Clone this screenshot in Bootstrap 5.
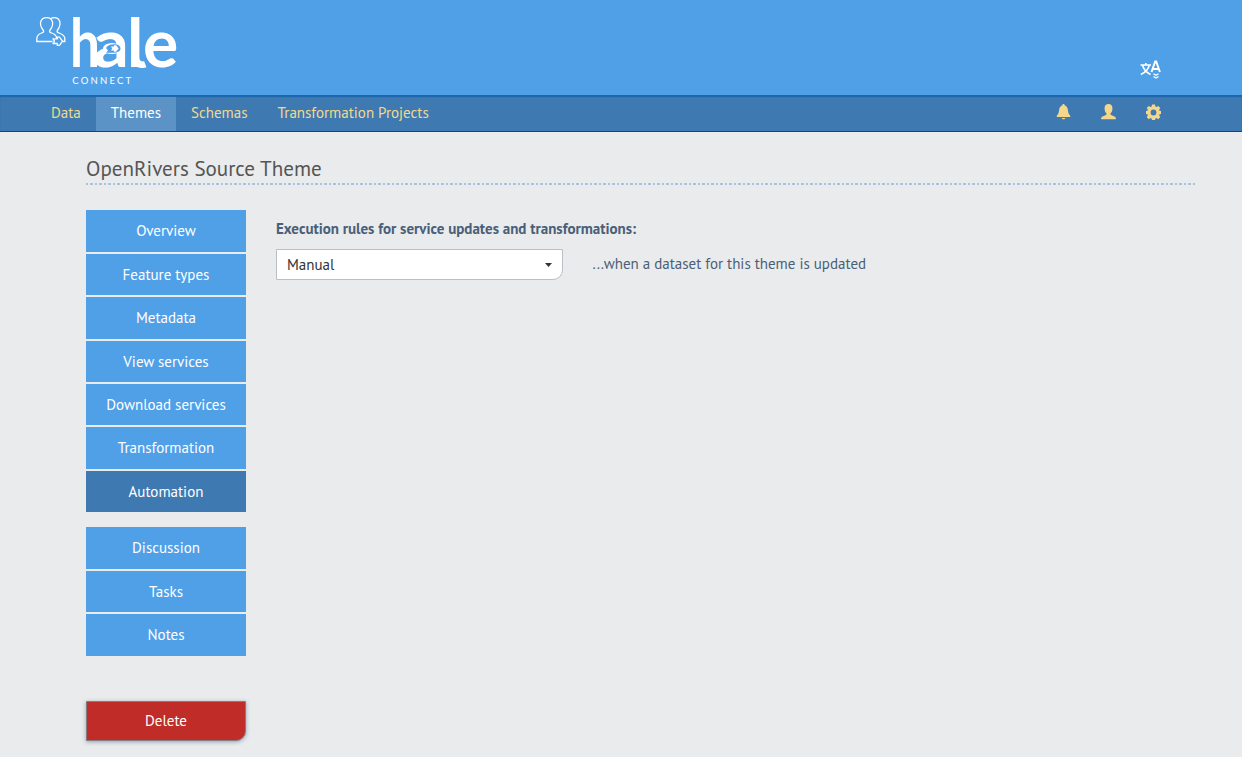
<!DOCTYPE html>
<html lang="en">
<head>
<meta charset="utf-8">
<meta name="viewport" content="width=device-width, initial-scale=1">
<title>hale connect</title>
<link href="https://cdn.jsdelivr.net/npm/bootstrap@5.3.0/dist/css/bootstrap.min.css" rel="stylesheet">
<style>
body{background:#e9ebec;font-family:"PT Sans","Noto Sans",sans-serif;font-size:15px;line-height:20px;color:#4a5f78;height:757px;overflow:hidden}
.brandbar{background:#50a0e8;height:95px;padding:0 81px 0 36px}
.brandbar .logo{margin-top:9px}
.lang{margin-top:59px}
.mainnav{background:#3f79b2;height:37px;border-bottom:1px solid #1e446e;box-shadow:inset 0 2px 1px #1d66ad;padding:2px 81px 0 36px}
.mainnav .nav-link{color:#f2d98c;height:34px;line-height:32px;padding:0 15px}
.mainnav .nav-link.active{background:#5c93c7;color:#fff}
.icons{gap:30px;padding-top:7px;color:#f4d78a}
.page{padding:25px 46px 0 86px}
.page h1{font-size:21.050px;line-height:24px;color:#555;height:28px;margin:0 0 25px;background:repeating-linear-gradient(90deg,#a8c4e0 0 2.400px,transparent 2.400px 4.500px) 0 100%/100% 2px no-repeat}
.side{width:160px;margin-right:30px;flex:none;padding-top:.3px}
.side .list-group{gap:2px;border-radius:0}
.side .list-group-item{background:#50a0e8;color:#fff;border:0!important;margin:0!important;border-radius:0!important;height:41.420px;line-height:41px;padding:0;text-align:center}
.side .list-group-item.active{background:#3f79b2}
.side .second{margin-top:15.200px}
.del{background:#c02c28;color:#fff;border:1px solid #8b7b80;border-radius:0 0 10px 0;height:40px;margin-top:45.200px;font-size:15px;line-height:38px;padding:0;box-shadow:0 1px 4px #8fa3b8}
.rule-title{margin:9px 0 10px}
.pick{width:287px;height:31px;background:#fff;border:1px solid #b8c0c6;border-radius:0 0 10px 0;color:#333;padding:0 10px;font-size:15px}
.trigger{margin-left:29.500px;margin-top:-1px}
</style>
</head>
<body>
<header class="brandbar d-flex justify-content-between align-items-start">
<svg class="logo" width="145" height="85" viewBox="36 9 145 85" overflow="visible" role="img" aria-label="hale connect">
<g fill="none" stroke="#fff" stroke-width="1.300" stroke-linejoin="round">
<path d="M52.500 41.500H36.800V38.500c.2-3 1.700-4.400 4.800-5.500 2.200-.8 2.600-1.600 1.200-3.500-4.300-5.500-2.300-11.800 3.800-11.800s8 6.300 3.800 11.800c-1.400 1.900-1 2.700 1.200 3.500 3.100 1.100 4.900 2.300 5 5"/>
<path d="M51 18.500c1-.6 2-.8 3.100-.8 6.100 0 7.700 6.300 3.800 11.800-1.400 1.900-1 2.700 1.200 3.500 3.600 1.300 5.700 2.500 5.700 5.500v3h-2.300"/>
<path d="M53 38.900h4.300v-1.800h2.200l3 4.100-3 4.200h-2.200v-1.900H53l1.500-2.300z"/>
</g>
<g font-family="Lato,sans-serif" font-weight="700" font-size="66" fill="#fff">
<text y="67" x="70" textLength="30" lengthAdjust="spacingAndGlyphs">h</text>
<text y="67" x="93" textLength="36" lengthAdjust="spacingAndGlyphs">a</text>
<text y="67" x="127">l</text>
<text y="67" x="143">e</text>
</g>
<path d="M131.400 56c0 7.500 4 12 11 12 1.500 0 3-.3 4-.7l-2.300-6c-3.600.7-5.100-1-5.100-5.300z" fill="#fff"/>
<ellipse cx="112" cy="48.500" rx="9" ry="5.500" fill="#fff"/>
<path d="M106 48c1.500-2.500 4-3.700 7.500-3.700 4.500 0 7 1.500 7 4.200s-2.500 4.200-7 4.200H106l2-2.200z" fill="#50a0e8"/>
<path d="M111 46.500h3v-1.300h2l2.700 3.300-2.700 3.300h-2v-1.300h-3l1.300-2z" fill="#fff"/>
<text x="72.200" y="83.500" font-family="Lato,sans-serif" font-size="9.500" fill="#fff" textLength="59">CONNECT</text>
</svg>
<svg class="lang" width="22" height="22" viewBox="1139 59 22 22" fill="none" stroke="#fff" stroke-width="1.600">
<path d="M1140.500 65h10.500M1145.800 63v2M1142.500 65c1 4.500 4 7.500 8 9.500M1149.300 65c-1 4.500-4 7.500-8.500 9.500"/>
<path d="M1151.500 72l3.700-10.500h1l3.700 10.500M1152.700 69h6" stroke-width="2"/>
<path d="M1153.500 73.800l2.500 1.500 2.500-1.500M1153.500 76.500l2.500 1.500 2.500-1.500" stroke-width="1.300"/>
</svg>
</header>
<nav class="mainnav d-flex justify-content-between">
<div class="nav flex-nowrap">
<a class="nav-link">Data</a>
<a class="nav-link active">Themes</a>
<a class="nav-link">Schemas</a>
<a class="nav-link">Transformation Projects</a>
</div>
<div class="icons d-flex">
<svg width="15" height="16" viewBox="0 0 15 16" fill="currentColor"><path d="M7.500 0c.8 0 1.100.5 1.100 1.200 2 .6 3 2.300 3.300 4.800.3 2.700.7 4.300 2.300 5.500v1.400H.8v-1.400C2.400 10.300 2.800 8.700 3.100 6c.3-2.500 1.300-4.200 3.300-4.800C6.400.5 6.700 0 7.500 0zM5.700 14h3.600c-.3 1.700-3.300 1.700-3.600 0z"/></svg>
<svg width="15" height="16" viewBox="0 0 16 16" preserveAspectRatio="none" fill="currentColor"><path d="M8 0c2.900 0 4.200 1.800 4.200 4.400 0 2.300-.8 3.800-2 4.800v1.600l4.700 2c.7.300 1 1.200 1 2.500H.1c0-1.300.3-2.200 1-2.500l4.700-2V9.200c-1.200-1-2-2.500-2-4.800C3.800 1.800 5.100 0 8 0z"/></svg>
<svg width="15" height="16" viewBox="0 0 15 16" fill="currentColor"><path fill-rule="evenodd" d="M6 .6h3l.4 2 1 .5 1.800-1.200 2.100 2.100-1.200 1.800.4 1 2 .4v2.700l-2 .4-.4 1 1.200 1.800-2.100 2.100-1.800-1.200-1 .4-.4 2H6l-.4-2-1-.4-1.800 1.200-2.100-2.100 1.200-1.800-.4-1-1.900-.4V7.200l1.900-.4.400-1L.7 4l2.100-2.100 1.800 1.200 1-.5zM7.500 5.600a2.900 2.900 0 1 0 0 5.800 2.900 2.900 0 0 0 0-5.800z"/></svg>
</div>
</nav>
<main class="page">
<h1 class="fw-normal">OpenRivers Source Theme</h1>
<div class="d-flex">
<aside class="side">
<div class="list-group">
<a class="list-group-item">Overview</a>
<a class="list-group-item">Feature types</a>
<a class="list-group-item">Metadata</a>
<a class="list-group-item">View services</a>
<a class="list-group-item">Download services</a>
<a class="list-group-item">Transformation</a>
<a class="list-group-item active">Automation</a>
</div>
<div class="list-group second">
<a class="list-group-item">Discussion</a>
<a class="list-group-item">Tasks</a>
<a class="list-group-item">Notes</a>
</div>
<button class="btn del w-100 d-block">Delete</button>
</aside>
<section>
<p class="rule-title fw-bold">Execution rules for service updates and transformations:</p>
<div class="d-flex align-items-center">
<button class="pick d-flex align-items-center justify-content-between"><span>Manual</span><svg width="7" height="4" viewBox="0 0 7 4"><path d="M0 0h7L3.500 4z" fill="#333"/></svg></button>
<span class="trigger">...when a dataset for this theme is updated</span>
</div>
</section>
</div>
</main>
<script src="https://cdn.jsdelivr.net/npm/bootstrap@5.3.0/dist/js/bootstrap.bundle.min.js"></script>
</body>
</html>
